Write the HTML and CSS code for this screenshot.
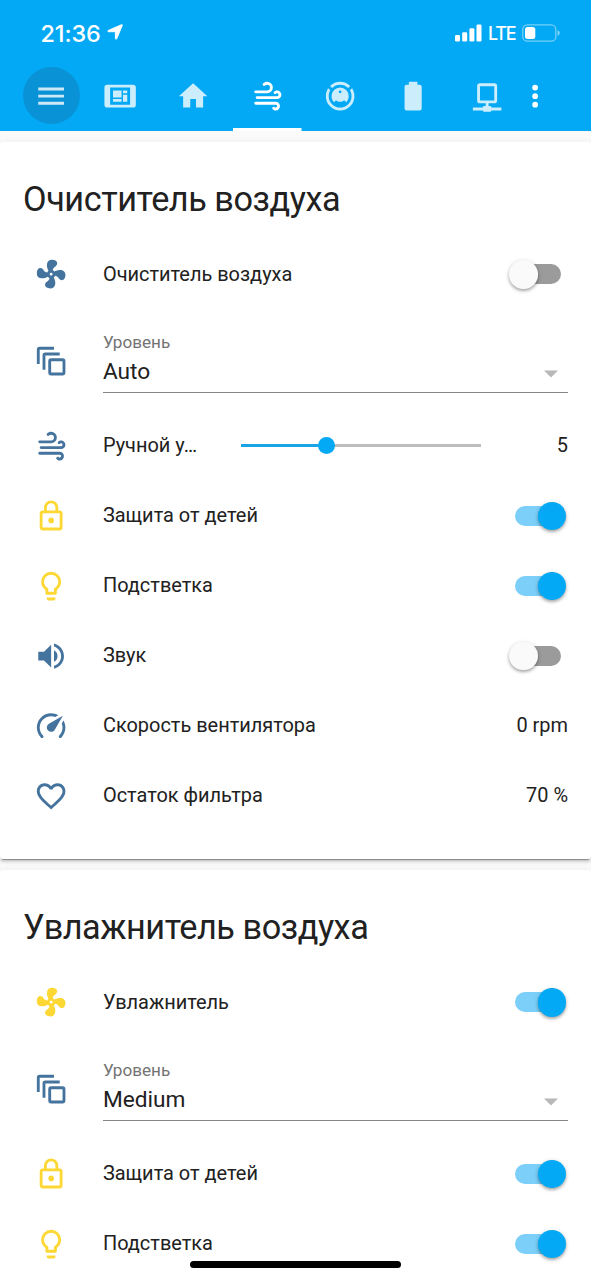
FILE: index.html
```
<!DOCTYPE html>
<html lang="ru">
<head>
<meta charset="utf-8">
<title>Home Assistant</title>
<link rel="stylesheet" href="styles.css">
</head>
<body>
<svg class="sprite" aria-hidden="true">
  <symbol id="fan" viewBox="0 0 24 24"><path d="M12,11A1,1 0 0,0 11,12A1,1 0 0,0 12,13A1,1 0 0,0 13,12A1,1 0 0,0 12,11M12.5,2C17,2 17.11,5.57 14.75,6.75C13.76,7.24 13.32,8.29 13.13,9.22C13.61,9.42 14.03,9.73 14.35,10.13C18.05,8.13 22.03,8.92 22.03,12.5C22.03,17 18.46,17.1 17.28,14.73C16.78,13.74 15.72,13.3 14.79,13.11C14.59,13.59 14.28,14 13.88,14.34C15.87,18.03 15.08,22 11.5,22C7,22 6.91,18.42 9.27,17.24C10.25,16.75 10.69,15.71 10.89,14.79C10.4,14.59 9.97,14.27 9.65,13.87C5.96,15.85 2,15.07 2,11.5C2,7 5.56,6.89 6.74,9.26C7.24,10.25 8.29,10.68 9.22,10.87C9.41,10.39 9.73,9.97 10.14,9.65C8.15,5.96 8.94,2 12.5,2Z"/></symbol>
  <symbol id="layers" viewBox="0 0 24 24"><path d="M4,2A2,2 0 0,0 2,4V14H4V4H14V2H4M8,6A2,2 0 0,0 6,8V18H8V8H18V6H8M20,12V20H12V12H20M20,10H12A2,2 0 0,0 10,12V20A2,2 0 0,0 12,22H20A2,2 0 0,0 22,20V12A2,2 0 0,0 20,10Z"/></symbol>
  <symbol id="wind" viewBox="0 0 24 24"><path d="M4,10A1,1 0 0,1 3,9A1,1 0 0,1 4,8H12A2,2 0 0,0 14,6A2,2 0 0,0 12,4C11.45,4 10.95,4.22 10.59,4.59C10.2,5 9.56,5 9.17,4.59C8.78,4.2 8.78,3.56 9.17,3.17C9.9,2.45 10.9,2 12,2A4,4 0 0,1 16,6A4,4 0 0,1 12,10H4M19,12A1,1 0 0,0 20,11A1,1 0 0,0 19,10C18.72,10 18.47,10.11 18.29,10.29C17.9,10.68 17.27,10.68 16.88,10.29C16.5,9.9 16.5,9.27 16.88,8.88C17.42,8.34 18.17,8 19,8A3,3 0 0,1 22,11A3,3 0 0,1 19,14H5A1,1 0 0,1 4,13A1,1 0 0,1 5,12H19M18,18H4A1,1 0 0,1 3,17A1,1 0 0,1 4,16H18A3,3 0 0,1 21,19A3,3 0 0,1 18,22C17.17,22 16.42,21.66 15.88,21.12C15.5,20.73 15.5,20.1 15.88,19.71C16.27,19.32 16.9,19.32 17.29,19.71C17.47,19.89 17.72,20 18,20A1,1 0 0,0 19,19A1,1 0 0,0 18,18Z"/></symbol>
  <symbol id="lock" viewBox="0 0 24 24"><path d="M12,17C10.89,17 10,16.1 10,15C10,13.89 10.89,13 12,13A2,2 0 0,1 14,15A2,2 0 0,1 12,17M18,20V10H6V20H18M18,8A2,2 0 0,1 20,10V20A2,2 0 0,1 18,22H6C4.89,22 4,21.1 4,20V10C4,8.89 4.89,8 6,8H7V6A5,5 0 0,1 12,1A5,5 0 0,1 17,6V8H18M12,3A3,3 0 0,0 9,6V8H15V6A3,3 0 0,0 12,3Z"/></symbol>
  <symbol id="bulb" viewBox="0 0 24 24"><path d="M12,2A7,7 0 0,1 19,9C19,11.38 17.81,13.47 16,14.74V17A1,1 0 0,1 15,18H9A1,1 0 0,1 8,17V14.74C6.19,13.47 5,11.38 5,9A7,7 0 0,1 12,2M9,21V20H15V21A1,1 0 0,1 14,22H10A1,1 0 0,1 9,21M12,4A5,5 0 0,0 7,9C7,11.05 8.23,12.81 10,13.58V16H14V13.58C15.77,12.81 17,11.05 17,9A5,5 0 0,0 12,4Z"/></symbol>
  <symbol id="volume" viewBox="0 0 24 24"><path d="M14,3.23V5.29C16.89,6.15 19,8.83 19,12C19,15.17 16.89,17.84 14,18.7V20.77C18,19.86 21,16.28 21,12C21,7.72 18,4.14 14,3.23M16.5,12C16.5,10.23 15.5,8.71 14,7.97V16C15.5,15.29 16.5,13.76 16.5,12M3,9V15H7L12,20V4L7,9H3Z"/></symbol>
  <symbol id="speed" viewBox="0 0 24 24"><path d="M12,16A3,3 0 0,1 9,13C9,11.88 9.61,10.9 10.5,10.39L20.21,4.77L14.68,14.35C14.18,15.33 13.17,16 12,16M12,3C13.81,3 15.5,3.5 16.97,4.32L14.87,5.53C14,5.19 13,5 12,5A8,8 0 0,0 4,13C4,15.21 4.89,17.21 6.34,18.65H6.35C6.74,19.04 6.74,19.67 6.35,20.06C5.96,20.45 5.32,20.45 4.93,20.07V20.07C3.12,18.26 2,15.76 2,13A10,10 0 0,1 12,3M22,13C22,15.76 20.88,18.26 19.07,20.07V20.07C18.68,20.45 18.05,20.45 17.66,20.06C17.27,19.67 17.27,19.04 17.66,18.65V18.65C19.11,17.2 20,15.21 20,13C20,12 19.81,11 19.46,10.1L20.67,8C21.5,9.5 22,11.18 22,13Z"/></symbol>
  <symbol id="heart" viewBox="0 0 24 24"><path d="M12.1,18.55L12,18.65L11.89,18.55C7.14,14.24 4,11.39 4,8.5C4,6.5 5.5,5 7.5,5C9.04,5 10.54,6 11.07,7.36H12.93C13.46,6 14.96,5 16.5,5C18.5,5 20,6.5 20,8.5C20,11.39 16.86,14.24 12.1,18.55M16.5,3C14.76,3 13.09,3.81 12,5.08C10.91,3.81 9.24,3 7.5,3C4.42,3 2,5.41 2,8.5C2,12.27 5.4,15.36 10.55,20.03L12,21.35L13.45,20.03C18.6,15.36 22,12.27 22,8.5C22,5.41 19.58,3 16.5,3Z"/></symbol>
  <symbol id="menu" viewBox="0 0 24 24"><path d="M3,6H21V8H3V6M3,11H21V13H3V11M3,16H21V18H3V16Z"/></symbol>
  <symbol id="dashboard" viewBox="0 0 24 24"><path fill-rule="evenodd" d="M3,4H21A2,2 0 0,1 23,6V18A2,2 0 0,1 21,20H3A2,2 0 0,1 1,18V6A2,2 0 0,1 3,4M5,6V18H19V6H5M7,8H13V13H7V8M14,8H17V10H14V8M14,11H17V16H14V11M7,14H13V16H7V14Z"/></symbol>
  <symbol id="home" viewBox="0 0 24 24"><path d="M10,20V14H14V20H19V12H22L12,3L2,12H5V20H10Z"/></symbol>
  <symbol id="vacuum" viewBox="0 0 24 24"><path d="M12,2C14.65,2 17.19,3.06 19.07,4.93L17.65,6.35C16.15,4.85 14.12,4 12,4C9.88,4 7.84,4.84 6.35,6.35L4.93,4.93C6.81,3.06 9.35,2 12,2M3.66,6.5L5.11,7.94C4.39,9.17 4,10.57 4,12A8,8 0 0,0 12,20A8,8 0 0,0 20,12C20,10.57 19.61,9.17 18.88,7.94L20.34,6.5C21.42,8.12 22,10.04 22,12A10,10 0 0,1 12,22A10,10 0 0,1 2,12C2,10.04 2.58,8.12 3.66,6.5M12,6A6,6 0 0,1 18,12C18,13.59 17.37,15.12 16.24,16.24L14.83,14.83C14.08,15.58 13.06,16 12,16C10.94,16 9.92,15.58 9.17,14.83L7.76,16.24C6.63,15.12 6,13.59 6,12A6,6 0 0,1 12,6M12,8A1,1 0 0,0 11,9A1,1 0 0,0 12,10A1,1 0 0,0 13,9A1,1 0 0,0 12,8Z"/></symbol>
  <symbol id="battery" viewBox="0 0 24 24"><path d="M16.67,4H15V2H9V4H7.33A1.33,1.33 0 0,0 6,5.33V20.67C6,21.4 6.6,22 7.33,22H16.67A1.33,1.33 0 0,0 18,20.67V5.33C18,4.6 17.4,4 16.67,4Z"/></symbol>
  <symbol id="network" viewBox="0 0 24 24"><path d="M15,20A1,1 0 0,0 14,19H13V17H17A2,2 0 0,0 19,15V5A2,2 0 0,0 17,3H7A2,2 0 0,0 5,5V15A2,2 0 0,0 7,17H11V19H10A1,1 0 0,0 9,20H2V22H9A1,1 0 0,0 10,23H14A1,1 0 0,0 15,22H22V20H15M7,15V5H17V15H7Z"/></symbol>
  <symbol id="dots" viewBox="0 0 24 24"><circle cx="12" cy="6" r="2"/><circle cx="12" cy="12" r="2"/><circle cx="12" cy="18" r="2"/></symbol>
</svg>

<header class="header">
  <div class="status">
    <span class="time">21:36</span>
    <svg class="location" viewBox="0 0 16 16"><path stroke="#fff" stroke-width="1" stroke-linejoin="round" d="M14.400.8Q15.600.3 15.200 1.500L9.800 14.600Q8.800 16 8.400 14.600V8.600Q8.400 7.700 7.500 7.700H1.400Q.1 7.200 1.200 6.500Z"/></svg>
    <svg class="signal" viewBox="0 0 27 18"><rect x="0" y="11" width="5" height="6.500" rx="1.300"/><rect x="7.200" y="8.300" width="5" height="9.200" rx="1.300"/><rect x="14.400" y="4.300" width="5" height="13.200" rx="1.300"/><rect x="21.500" y=".5" width="5" height="17" rx="1.300"/></svg>
    <span class="carrier">LTE</span>
    <svg class="charge" viewBox="0 0 38 18"><rect x=".8" y=".8" width="33" height="16.400" rx="4.500" fill="none" stroke="#fff" stroke-opacity=".45" stroke-width="1.300"/><rect x="3" y="3" width="10.300" height="12" rx="2.500"/><path d="M35.500 6.200Q37.800 7 37.800 9T35.500 11.800Z" opacity=".5"/></svg>
  </div>
  <nav class="toolbar">
    <div class="menu"><svg class="icon"><use href="#menu"/></svg></div>
    <div class="tabs">
      <div class="tab"><svg class="icon"><use href="#dashboard"/></svg></div>
      <div class="tab"><svg class="icon"><use href="#home"/></svg></div>
      <div class="tab active"><svg class="icon"><use href="#wind"/></svg></div>
      <div class="tab"><svg class="icon"><use href="#vacuum"/></svg></div>
      <div class="tab"><svg class="icon"><use href="#battery"/></svg></div>
      <div class="tab"><svg class="icon"><use href="#network"/></svg></div>
    </div>
    <svg class="icon more"><use href="#dots"/></svg>
  </nav>
</header>

<main class="view">
  <section class="card">
    <h2 class="title">Очиститель воздуха</h2>
    <div class="row"><svg class="icon"><use href="#fan"/></svg><span class="name">Очиститель воздуха</span><span class="switch"></span></div>
    <div class="row select"><svg class="icon"><use href="#layers"/></svg>
      <div class="field"><span class="label">Уровень</span><div class="choice"><span>Auto</span><i class="arrow"></i></div></div></div>
    <div class="row"><svg class="icon"><use href="#wind"/></svg><span class="name short">Ручной у…</span><div class="slider"><div class="fill"></div><div class="knob"></div></div><span class="value">5</span></div>
    <div class="row"><svg class="icon lit"><use href="#lock"/></svg><span class="name">Защита от детей</span><span class="switch on"></span></div>
    <div class="row"><svg class="icon lit"><use href="#bulb"/></svg><span class="name">Подстветка</span><span class="switch on"></span></div>
    <div class="row"><svg class="icon"><use href="#volume"/></svg><span class="name">Звук</span><span class="switch"></span></div>
    <div class="row"><svg class="icon"><use href="#speed"/></svg><span class="name">Скорость вентилятора</span><span class="value">0 rpm</span></div>
    <div class="row"><svg class="icon"><use href="#heart"/></svg><span class="name">Остаток фильтра</span><span class="value">70 %</span></div>
  </section>
  <section class="card">
    <h2 class="title">Увлажнитель воздуха</h2>
    <div class="row"><svg class="icon lit"><use href="#fan"/></svg><span class="name">Увлажнитель</span><span class="switch on"></span></div>
    <div class="row select"><svg class="icon"><use href="#layers"/></svg>
      <div class="field"><span class="label">Уровень</span><div class="choice"><span>Medium</span><i class="arrow"></i></div></div></div>
    <div class="row"><svg class="icon lit"><use href="#lock"/></svg><span class="name">Защита от детей</span><span class="switch on"></span></div>
    <div class="row"><svg class="icon lit"><use href="#bulb"/></svg><span class="name">Подстветка</span><span class="switch on"></span></div>
  </section>
</main>
<div class="home-bar"></div>
</body>
</html>
```
FILE: styles.css
```
* { box-sizing: border-box; }

body {
  margin: 0;
  height: 1280px;
  overflow: hidden;
  background: #fafafa;
  color: #212121;
  font-family: Roboto, sans-serif;
  font-size: 19.950px;
}

.sprite { position: absolute; width: 0; height: 0; }

.icon {
  flex: none;
  width: 34.26px;
  height: 34.26px;
  fill: #44739e;
}
.icon.lit { fill: #fdd835; }

/* Header */
.header {
  height: 131.400px;
  background: #03a9f4;
  color: #fff;
}
.header svg { fill: #fff; }

.status {
  display: flex;
  align-items: center;
  height: 61px;
  padding: 5px 31px 0 40.500px;
  font-family: Inter, sans-serif;
}
.time { width: 61px; font-size: 23.400px; font-weight: 550; letter-spacing: -0.1px; white-space: nowrap; }
.location { width: 16px; height: 16px; margin: -2px 0 0 5.500px; }
.signal { width: 27px; height: 18px; margin-left: auto; }
.carrier { width: 28px; margin-left: 6px; font-size: 18px; font-weight: 500; letter-spacing: -1.3px; }
.charge { width: 38px; height: 18px; margin-left: 6px; }

.toolbar { display: flex; height: 70.400px; }
.menu {
  display: flex;
  align-items: center;
  justify-content: center;
  width: 57px;
  height: 57px;
  margin: 6px 3.300px 0 23px;
  border-radius: 50%;
  background: #0993d6;
}
.menu .icon { margin-top: 1px; }
.menu .icon, .tab .icon { opacity: 0.8; }
.tabs { display: flex; }
.tab {
  display: flex;
  justify-content: center;
  width: 73.400px;
  padding-top: 17.700px;
}
.tab.active { background: linear-gradient(#fff, #fff) center bottom / 68.500px 3px no-repeat; }
.tab.active .icon { opacity: 1; }
.more { margin: 17.900px 0 0 -5.500px; }

/* Cards */
.view { display: flex; flex-direction: column; gap: 11px; padding-top: 10.600px; }
.card {
  padding: 0 23px 28px 34.400px;
  border-radius: 3px;
  background: #fff;
  box-shadow: 0 3px 3px rgba(0, 0, 0, 0.14), 0 1px 7px rgba(0, 0, 0, 0.08), 0 3px 1px -2px rgba(0, 0, 0, 0.35);
}
.title {
  height: 97px;
  margin: 0 0 0 -11.300px;
  padding-top: 37px;
  font-size: 34.260px;
  font-weight: 400;
  line-height: 40px;
  letter-spacing: -0.46px;
}

.row { display: flex; align-items: center; height: 70px; padding-top: 0.8px; }
.name { margin: -1px 0 0 34.300px; white-space: nowrap; }
.name.short { width: 138px; }
.value { margin: -1px 0 0 auto; }
.select ~ .row .name, .select ~ .row .value { margin-top: -3px; }
.select ~ .row .switch, .select ~ .row .slider { margin-top: -1px; }

/* Toggle */
.switch {
  display: flex;
  align-items: center;
  width: 46px;
  height: 20px;
  margin: 0 7px 0 auto;
  border-radius: 10px;
  background: #9b9b9b;
}
.switch::before {
  content: "";
  flex: none;
  width: 28.600px;
  height: 28.600px;
  margin-left: -5.700px;
  border-radius: 50%;
  background: #fafafa;
  box-shadow: 0 2px 3px rgba(0, 0, 0, 0.26), 0 1px 5px rgba(0, 0, 0, 0.14);
}
.switch.on { background: #7bcff9; }
.switch.on::before { margin-left: 22.900px; background: #03a9f4; }

/* Dropdown */
.row.select { height: 102px; padding: 2px 0 0; }
.field { flex: 1; align-self: flex-start; height: 82px; margin-left: 34.300px; padding-top: 21px; border-bottom: 1.500px solid #868686; }
.label { display: block; height: 22px; color: #737373; font-size: 17.120px; line-height: 20px; }
.choice { display: flex; align-items: center; justify-content: space-between; height: 36px; padding-right: 10px; font-size: 22.700px; }
.arrow { width: 14px; height: 7px; margin-top: 4px; background: #b8b8b8; clip-path: polygon(0 0, 100% 0, 50% 100%); }

/* Slider */
.slider { display: flex; align-items: center; width: 240px; height: 3px; background: #bdbdbd; }
.fill { width: 77.300px; height: 3px; background: #1ba3e8; }
.knob { flex: none; width: 17px; height: 17px; border-radius: 50%; background: #03a9f4; }

.home-bar {
  position: absolute;
  left: 190px;
  top: 1261px;
  width: 211px;
  height: 7px;
  border-radius: 4px;
  background: #000;
}
```
